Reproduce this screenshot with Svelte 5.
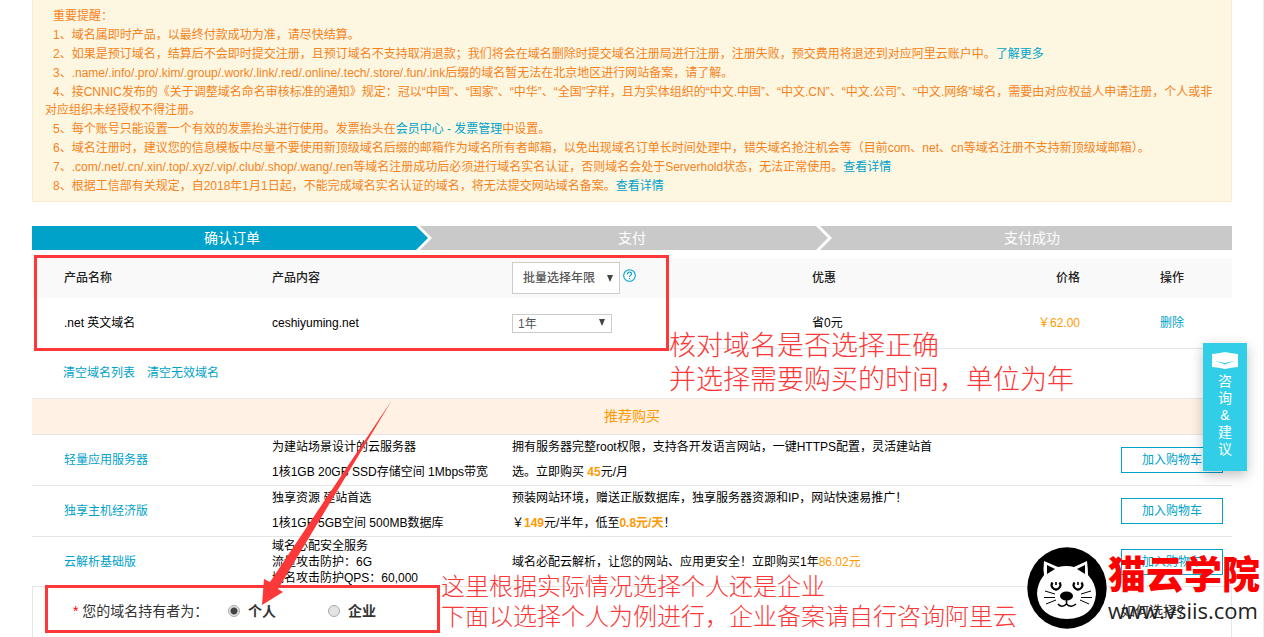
<script lang="ts">
    type Part = { text: string; href?: string };

    const notices: Part[][] = [
        [{ text: '1、域名属即时产品，以最终付款成功为准，请尽快结算。' }],
        [
            { text: '2、如果是预订域名，结算后不会即时提交注册，且预订域名不支持取消退款；我们将会在域名删除时提交域名注册局进行注册，注册失败，预交费用将退还到对应阿里云账户中。' },
            { text: '了解更多', href: '#more' }
        ],
        [{ text: '3、.name/.info/.pro/.kim/.group/.work/.link/.red/.online/.tech/.store/.fun/.ink后缀的域名暂无法在北京地区进行网站备案，请了解。' }],
        [{ text: '4、接CNNIC发布的《关于调整域名命名审核标准的通知》规定：冠以“中国”、“国家”、“中华”、“全国”字样，且为实体组织的“中文.中国”、“中文.CN”、“中文.公司”、“中文.网络”域名，需要由对应权益人申请注册，个人或非对应组织未经授权不得注册。' }],
        [
            { text: '5、每个账号只能设置一个有效的发票抬头进行使用。发票抬头在' },
            { text: '会员中心 - 发票管理', href: '#invoice' },
            { text: '中设置。' }
        ],
        [{ text: '6、域名注册时，建议您的信息模板中尽量不要使用新顶级域名后缀的邮箱作为域名所有者邮箱，以免出现域名订单长时间处理中，错失域名抢注机会等（目前com、net、cn等域名注册不支持新顶级域邮箱）。' }],
        [
            { text: '7、.com/.net/.cn/.xin/.top/.xyz/.vip/.club/.shop/.wang/.ren等域名注册成功后必须进行域名实名认证，否则域名会处于Serverhold状态，无法正常使用。' },
            { text: '查看详情', href: '#verify' }
        ],
        [
            { text: '8、根据工信部有关规定，自2018年1月1日起，不能完成域名实名认证的域名，将无法提交网站域名备案。' },
            { text: '查看详情', href: '#record' }
        ]
    ];

    const steps = ['确认订单', '支付', '支付成功'];
    const current = 0;

    let batchYears = $state('');
    let years = $state('1');
    let owner = $state('person');
</script>

<div class="page">
    <section class="notice">
        <p>重要提醒：</p>
        {#each notices as parts}
            <p>
                {#each parts as part}{#if part.href}<a href={part.href}>{part.text}</a>{:else}{part.text}{/if}{/each}
            </p>
        {/each}
    </section>

    <ol class="steps">
        {#each steps as step, i}
            <li class:active={i === current}>
                {step}
                {#if i < steps.length - 1}
                    <svg width="16" height="24" viewBox="0 0 16 24" aria-hidden="true">
                        <path d="M0 0H16V24H0z" fill="#c9c9c9" />
                        <path d="M0 0H4L16 12L4 24H0z" fill="#fff" />
                        <path d="M0 0L12 12L0 24z" fill="currentColor" class="tip" />
                    </svg>
                {/if}
            </li>
        {/each}
    </ol>

    <table class="order">
        <colgroup>
            <col class="name" />
            <col class="content" />
            <col class="years" />
            <col />
            <col class="price" />
            <col class="action" />
        </colgroup>
        <thead>
            <tr>
                <th>产品名称</th>
                <th>产品内容</th>
                <th>
                    <div class="batch">
                        <div class="select large">
                            <select aria-label="批量选择年限" bind:value={batchYears}>
                                <option value="">批量选择年限</option>
                                <option value="1">1年</option>
                                <option value="2">2年</option>
                            </select>
                            <svg width="6" height="7" viewBox="0 0 6 7" aria-hidden="true"><path d="M0 0H6L3 7z" fill="#444" /></svg>
                        </div>
                        <svg class="help" width="13" height="13" viewBox="0 0 13 13" fill="none" stroke="#00a2ca" aria-hidden="true">
                            <circle cx="6.5" cy="6.5" r="5.8" stroke-width="1.1" />
                            <path d="M4.5 5.2C4.5 2.4 8.5 2.4 8.5 5C8.5 6.4 6.5 6.4 6.5 8M6.5 9V10.2" stroke-width="1.1" />
                        </svg>
                    </div>
                </th>
                <th>优惠</th>
                <th class="right">价格</th>
                <th class="last">操作</th>
            </tr>
        </thead>
        <tbody>
            <tr>
                <td>.net 英文域名</td>
                <td>ceshiyuming.net</td>
                <td>
                    <div class="select">
                        <select aria-label="年限" bind:value={years}>
                            <option value="1">1年</option>
                            <option value="2">2年</option>
                        </select>
                        <svg width="6" height="7" viewBox="0 0 6 7" aria-hidden="true"><path d="M0 0H6L3 7z" fill="#444" /></svg>
                    </div>
                </td>
                <td>省0元</td>
                <td class="right money">￥62.00</td>
                <td class="last"><a href="#delete">删除</a></td>
            </tr>
        </tbody>
    </table>

    <div class="clear-links">
        <a href="#clear">清空域名列表</a>
        <a href="#clear-invalid">清空无效域名</a>
    </div>

    <h2>推荐购买</h2>

    <table class="recommend">
        <colgroup>
            <col class="name" />
            <col class="content" />
            <col class="desc" />
            <col />
        </colgroup>
        <tbody>
            <tr>
                <td><a href="#swas">轻量应用服务器</a></td>
                <td>为建站场景设计的云服务器<br />1核1GB 20GB SSD存储空间 1Mbps带宽</td>
                <td>拥有服务器完整root权限，支持各开发语言网站，一键HTTPS配置，灵活建站首选。立即购买 <b>45</b>元/月</td>
                <td class="buy"><button type="button">加入购物车</button></td>
            </tr>
            <tr>
                <td><a href="#host">独享主机经济版</a></td>
                <td>独享资源 建站首选<br />1核1GB 5GB空间 500MB数据库</td>
                <td>预装网站环境，赠送正版数据库，独享服务器资源和IP，网站快速易推广！<br />￥<b>149</b>元/半年，低至<b>0.8元/天</b>！</td>
                <td class="buy"><button type="button">加入购物车</button></td>
            </tr>
            <tr class="tight">
                <td><a href="#dns">云解析基础版</a></td>
                <td>域名必配安全服务<br />流量攻击防护：6G<br />域名攻击防护QPS：60,000</td>
                <td>域名必配云解析，让您的网站、应用更安全！立即购买1年<span class="money">86.02元</span></td>
                <td class="buy"><button type="button">加入购物车</button></td>
            </tr>
        </tbody>
    </table>

    <fieldset class="owner">
        <div class="owner-row">
            <span class="owner-label"><i>*</i> 您的域名持有者为：</span>
            <label><input type="radio" name="owner" value="person" bind:group={owner} />个人</label>
            <label><input type="radio" name="owner" value="company" bind:group={owner} />企业</label>
            <a class="how" href="#how">如何选择？</a>
        </div>
    </fieldset>
</div>

<a class="feedback" href="#feedback">
    <svg width="26" height="17" viewBox="0 0 26 17" aria-hidden="true">
        <path d="M0 2Q7 1.5 13 0Q19 1.5 26 2V15Q19 15.5 13 17Q7 15.5 0 15z" fill="#fff" />
        <path d="M3 9.2Q9 9.8 13 11Q17 9.8 23 9.2Q17 10.6 13 12.6Q9 10.6 3 9.2z" fill="#32cde6" />
    </svg>
    <span>咨</span><span>询</span><span>&amp;</span><span>建</span><span>议</span>
</a>

<!-- tutorial marks drawn over the order page -->
<div class="mark box-order"></div>
<div class="mark box-owner"></div>
<svg class="arrow" width="130" height="205" viewBox="0 0 130 205" aria-hidden="true">
    <path d="M130 0L16 189L21 192L0 205L2 179L8 182z" fill="#fc3838" />
</svg>
<p class="tip-text tip-order">核对域名是否选择正确<br />并选择需要购买的时间，单位为年</p>
<p class="tip-text tip-owner">这里根据实际情况选择个人还是企业<br />下面以选择个人为例进行，企业备案请自行咨询阿里云</p>

<div class="watermark">
    <svg width="80" height="82" viewBox="0 0 80 82" aria-hidden="true">
        <ellipse cx="40" cy="41" rx="39.7" ry="40.7" fill="#000" />
        <path d="M17 14L31 20Q40 18 47 20L60 14Q61 22 61 28Q69 37 69 47Q67 71 40 72Q12 71 10 47Q10 37 17 28Q16 22 17 14z" fill="#fff" />
        <path d="M20 18L28 22L20 27zM58 18L50 22L58 27z" />
        <path d="M25.5 35.5A4.3 4.3 0 1 0 32.5 35.5M47.5 35.5A4.3 4.3 0 1 0 54.5 35.5" fill="none" stroke="#000" stroke-width="2.2" />
        <path d="M29 35V38M51 35V38" stroke="#000" stroke-width="1.6" />
        <ellipse cx="39.5" cy="49" rx="6.5" ry="4.5" />
        <path d="M39.5 53V57M31 57Q35 61.5 39.5 57Q44 61.5 49 57" fill="none" stroke="#000" stroke-width="1.6" />
        <path d="M18 44L28 47M17 50.5H28M19 57L29 53M64 44L54 47M65 50.5H54M62 57L53 53" stroke="#000" />
    </svg>
    <div>
        <strong>猫云学院</strong>
        <span>www.vsiis.com</span>
    </div>
</div>

<style>
    :global(body) {
        --blue: #00a2ca;
        --orange: #f90;
        --line: #e6e6e6;
        --red: #fc3838;
        position: relative;
        overflow: hidden;
        background: #fff;
        color: #000;
        font-family: "Liberation Sans", "Noto Sans CJK SC", sans-serif;
        font-size: 12px;
        line-height: 18px;
    }

    a {
        color: var(--blue);
        text-decoration: none;
    }

    .page {
        padding: 0 31px 0 32px;
        border-right: 1px solid #eee;
    }

    .notice {
        padding: 7px 12px 5px;
        border: 1px solid #faebcc;
        border-top: 0;
        background: #fdf7e2;
        color: #f7821b;

        & p {
            margin: 0 0 1px;
            text-indent: 8px;
        }
    }

    .steps {
        display: flex;
        margin: 24px 0 8px;
        padding: 0;
        list-style: none;

        & li {
            position: relative;
            flex: 1;
            background: #c9c9c9;
            color: #fff;
            font-size: 14px;
            line-height: 24px;
            text-align: center;
        }

        & svg {
            position: absolute;
            top: 0;
            right: 0;
        }

        & .tip {
            color: #c9c9c9;
        }

        & .active {
            background: var(--blue);
        }

        & .active .tip {
            color: var(--blue);
        }
    }

    table {
        width: 100%;
        border-collapse: collapse;
        table-layout: fixed;
    }

    col.name,
    col.content {
        width: 20%;
    }

    col.years {
        width: 25%;
    }

    col.price {
        width: 148px;
    }

    col.action {
        width: 152px;
    }

    col.desc {
        width: 35%;
    }

    th,
    td {
        padding: 0;
        text-align: left;
    }

    th:first-child,
    td:first-child {
        padding-left: 32px;
    }

    th {
        height: 40px;
        background: #f9f9f9;
        color: #222;
        font-weight: 500;
    }

    .order td {
        height: 50px;
        border-bottom: 1px solid var(--line);
    }

    .order .right {
        text-align: right;
    }

    .order .last {
        padding-left: 80px;
    }

    .money,
    b {
        color: var(--orange);
    }

    .batch {
        display: flex;
        gap: 3px;
    }

    .help {
        margin-top: 7px;
    }

    .select {
        position: relative;
        width: 100px;

        & select {
            display: block;
            width: 100%;
            height: 19px;
            padding: 0 5px;
            border: 1px solid #ccc;
            border-radius: 0;
            appearance: none;
            background: #fff;
            color: #555;
            font: inherit;
        }

        & svg {
            position: absolute;
            top: 5px;
            right: 7px;
        }

        &.large {
            width: 108px;
        }

        &.large select {
            height: 32px;
            padding: 0 10px;
        }

        &.large svg {
            top: 13px;
        }
    }

    .clear-links {
        display: flex;
        gap: 12px;
        padding: 15px 31px 16px;
    }

    h2 {
        margin: 0;
        border: solid var(--line);
        border-width: 1px 0;
        background: #fff2e5;
        color: var(--orange);
        font-size: 14px;
        font-weight: 400;
        line-height: 35px;
        text-align: center;
    }

    .recommend {
        & td {
            height: 50px;
            border-bottom: 1px solid var(--line);
            line-height: 25px;
        }

        & .tight td {
            height: 49px;
            line-height: 16px;
        }

        & .buy {
            padding-right: 9px;
            text-align: right;
        }

        & button {
            width: 102px;
            height: 26px;
            padding: 0;
            border: 1px solid var(--blue);
            background: #fff;
            color: var(--blue);
            font: inherit;
        }
    }

    .owner {
        margin: 0;
        padding: 12px 40px 18px;
        border: solid var(--line);
        border-width: 0 1px;
        color: #333;
        font-size: 14px;
        line-height: 24px;

        & i {
            color: #f00;
            font-style: normal;
        }

        & label {
            display: flex;
            align-items: center;
            gap: 8px;
            width: 100px;
            font-weight: 700;
        }

        & input {
            width: 12px;
            height: 12px;
            margin: 0;
            border: 1px solid #aaa;
            border-radius: 50%;
            appearance: none;
            background: #e4e4e4;
        }

        & input:checked {
            background: radial-gradient(circle, #444 3px, #e4e4e4 4px);
        }
    }

    .owner-row {
        display: flex;
    }

    .owner-label {
        width: 155px;
    }

    .how {
        margin-left: auto;
        color: #333;
    }

    .feedback {
        position: absolute;
        top: 343px;
        right: 17px;
        display: flex;
        flex-direction: column;
        align-items: center;
        width: 44px;
        padding: 9px 0 13px;
        background: #32cde6;
        box-shadow: 0 4px 12px rgba(0, 0, 0, 0.25);
        box-sizing: border-box;
        color: #fff;
        font-size: 14px;
        line-height: 17px;

        & svg {
            margin-bottom: 4px;
        }
    }

    .mark {
        position: absolute;
        box-sizing: border-box;
        border: 3px solid var(--red);
        pointer-events: none;
    }

    .box-order {
        top: 255px;
        left: 34px;
        width: 635px;
        height: 96px;
    }

    .box-owner {
        top: 585px;
        left: 45px;
        width: 395px;
        height: 48px;
    }

    .arrow {
        position: absolute;
        top: 400px;
        left: 262px;
        pointer-events: none;
    }

    .tip-text {
        position: absolute;
        margin: 0;
        color: var(--red);
        font-family: "Noto Sans CJK SC", sans-serif;
        font-weight: 300;
        white-space: nowrap;
        pointer-events: none;
    }

    .tip-order {
        top: 327px;
        left: 669px;
        font-size: 27px;
        line-height: 34px;
    }

    .tip-owner {
        top: 570px;
        left: 441px;
        font-size: 24px;
        line-height: 30px;
    }

    .watermark {
        position: absolute;
        top: 547px;
        right: 4px;
        display: flex;
        gap: 1px;
        pointer-events: none;

        & div {
            display: flex;
            flex-direction: column;
        }

        & strong {
            color: #f00;
            font-family: "Noto Sans CJK SC", sans-serif;
            font-size: 38px;
            font-weight: 900;
            line-height: 50px;
        }

        & span {
            color: #222;
            font-family: "Open Sans", sans-serif;
            font-size: 22px;
            line-height: 26px;
        }
    }
</style>
